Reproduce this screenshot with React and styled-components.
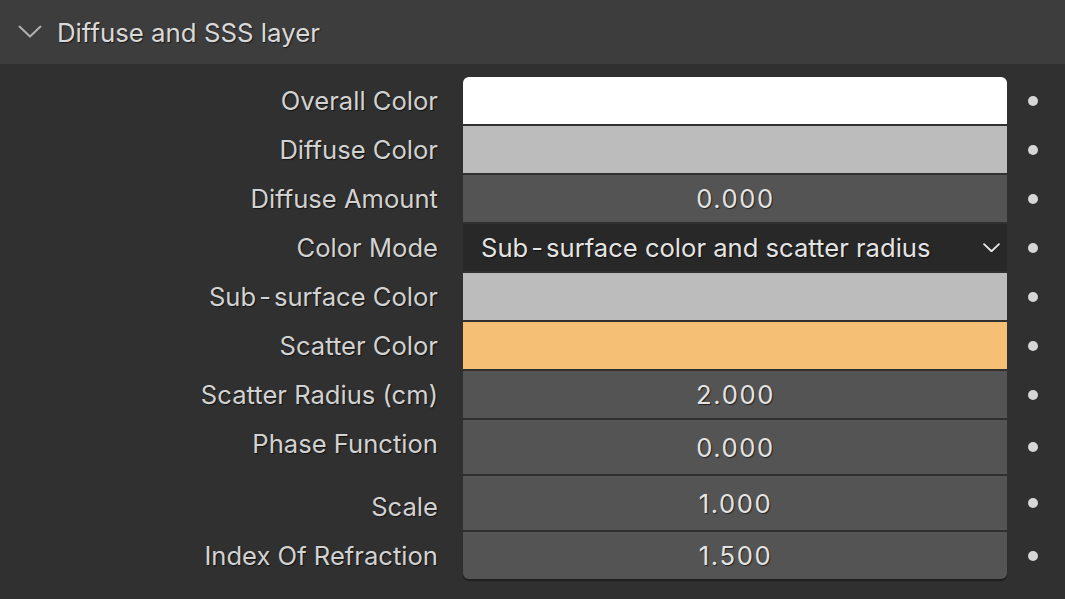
import React from "react";
import styled, { createGlobalStyle } from "styled-components";

const Global = createGlobalStyle`
  html, body { margin: 0; padding: 0; background: #303030; }
  body { font-family: Inter, "Noto Sans", sans-serif; -webkit-font-smoothing: antialiased; }
  #root { width: 1065px; height: 599px; overflow: hidden; }
`;

const Panel = styled.div`
  width: 1065px;
  height: 599px;
  background: #303030;
  display: flex;
  flex-direction: column;
`;

const Header = styled.div`
  height: 64px;
  background: #3d3d3d;
  display: flex;
  align-items: center;
  gap: 15px;
  padding-left: 18px;
  box-sizing: border-box;
  color: #d9d9d9;
  font-size: 25.8px;
  text-shadow: 1px 1px 1px rgba(0, 0, 0, 0.55);
`;

const Body = styled.div`
  padding: 13px 6px 0 0;
  display: grid;
  grid-template-columns: 463px 544px 52px;
  row-gap: 2px;
`;

const Label = styled.div`
  grid-column: 1;
  height: ${(p) => p.$h}px;
  display: flex;
  justify-content: flex-end;
  align-items: ${(p) => p.$align || "center"};
  padding-right: 25px;
  color: #d2d2d2;
  font-size: 25.6px;
  text-shadow: 1px 1px 1px rgba(0, 0, 0, 0.6);
  white-space: nowrap;
  & > span { display: flex; align-items: center; height: 47px; }
`;

const Field = styled.div`
  grid-column: 2;
  height: ${(p) => p.$h}px;
  background: ${(p) => p.$bg};
  display: flex;
  align-items: center;
  justify-content: ${(p) => (p.$left ? "space-between" : "center")};
  padding: ${(p) => (p.$left ? "0 7px 0 18px" : "0")};
  box-sizing: border-box;
  color: #e4e4e4;
  font-size: 25.6px;
  text-shadow: 1px 1px 1px rgba(0, 0, 0, 0.6);
  border-radius: ${(p) => (p.$first ? "6px 6px 0 0" : p.$last ? "0 0 6px 6px" : "0")};
  box-shadow: ${(p) => (p.$last ? "0 2px 1px rgba(0,0,0,0.35)" : "none")};
  white-space: nowrap;
`;

const Value = styled.span`
  letter-spacing: 1.6px;
  padding-left: 1px;
`;

const DotCell = styled.div`
  grid-column: 3;
  height: ${(p) => p.$h}px;
  display: flex;
  align-items: center;
  justify-content: center;
`;

const Dot = styled.div`
  width: 10px;
  height: 10px;
  border-radius: 50%;
  background: #d6d6d6;
`;

const Hyphen = styled.span`
  margin: 0 3px;
`;

const Chevron = ({ size = 24, color = "#b0b0b0", w = 2 }) => (
  <svg width={size} height={size * 0.55} viewBox="0 0 24 13" fill="none">
    <path d="M1.5 1.5 L12 11.5 L22.5 1.5" stroke={color} strokeWidth={w} strokeLinecap="round" strokeLinejoin="round" />
  </svg>
);

const SubSurface = ({ rest }) => (
  <>
    Sub<Hyphen>-</Hyphen>surface{rest}
  </>
);

const rows = [
  { label: "Overall Color", bg: "#ffffff", h: 47 },
  { label: "Diffuse Color", bg: "#bcbcbc", h: 47 },
  { label: "Diffuse Amount", bg: "#545454", h: 47, value: "0.000" },
  { label: "Color Mode", bg: "#282828", h: 47, dropdown: true },
  { label: <SubSurface rest=" Color" />, bg: "#bcbcbc", h: 47 },
  { label: "Scatter Color", bg: "#f6bf76", h: 47 },
  { label: "Scatter Radius (cm)", bg: "#545454", h: 47, value: "2.000" },
  { label: "Phase Function", bg: "#545454", h: 54, value: "0.000", align: "flex-start" },
  { label: "Scale", bg: "#545454", h: 54, value: "1.000", align: "flex-end" },
  { label: "Index Of Refraction", bg: "#545454", h: 47, value: "1.500" },
];

export default function App() {
  return (
    <>
      <Global />
      <Panel>
        <Header>
          <Chevron />
          <span>Diffuse and SSS layer</span>
        </Header>
        <Body>
          {rows.map((r, i) => (
            <React.Fragment key={i}>
              <Label $h={r.h} $align={r.align}>
                <span>{r.label}</span>
              </Label>
              <Field
                $h={r.h}
                $bg={r.bg}
                $left={r.dropdown}
                $first={i === 0}
                $last={i === rows.length - 1}
              >
                {r.dropdown ? (
                  <>
                    <span>
                      <SubSurface rest=" color and scatter radius" />
                    </span>
                    <Chevron size={17} color="#e6e6e6" w={2.6} />
                  </>
                ) : (
                  <Value>{r.value}</Value>
                )}
              </Field>
              <DotCell $h={r.h}>
                <Dot />
              </DotCell>
            </React.Fragment>
          ))}
        </Body>
      </Panel>
    </>
  );
}
